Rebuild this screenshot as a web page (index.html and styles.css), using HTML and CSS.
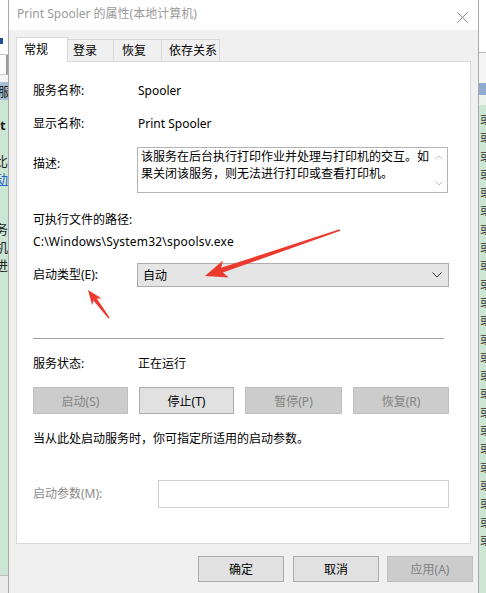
FILE: index.html
```html
<!DOCTYPE html>
<html lang="zh-CN">
<head>
<meta charset="utf-8">
<title>Print Spooler 的属性</title>
<link rel="stylesheet" href="styles.css">
</head>
<body>
<div class="screen">
  <div class="bg-left">
    <div class="bl-top"><span class="bl-dot"></span></div>
    <div class="bl-box"></div>
    <div class="bl-gap"></div>
    <div class="bl-head"><span class="frag">服</span></div>
    <div class="bl-list">
      <span class="frag f-bold">t</span>
      <span class="frag">比</span>
      <span class="frag f-link">动</span>
      <span class="frag f-gap"></span>
      <span class="frag">务</span>
      <span class="frag">机</span>
      <span class="frag">进</span>
    </div>
    <div class="bl-bottom"></div>
  </div>

  <div class="dialog">
    <div class="titlebar">
      <span class="title">Print Spooler 的属性(本地计算机)</span>
      <svg class="close" width="11" height="11" viewBox="0 0 11 11"><path d="M0.5 0.5 L10.5 10.5 M10.5 0.5 L0.5 10.5" stroke="#8a8a8a" stroke-width="1" fill="none"/></svg>
    </div>
    <div class="dlg-body">
      <div class="tabs">
        <div class="tab active t1">常规</div>
        <div class="tab t2">登录</div>
        <div class="tab t3">恢复</div>
        <div class="tab t4">依存关系</div>
      </div>
      <div class="panel">
        <div class="row r-name"><span class="k">服务名称:</span><span class="v">Spooler</span></div>
        <div class="row r-disp"><span class="k">显示名称:</span><span class="v">Print Spooler</span></div>
        <div class="row r-desc">
          <span class="k k-top">描述:</span>
          <div class="desc">
            <div class="desc-text">该服务在后台执行打印作业并处理与打印机的交互。如<br>果关闭该服务，则无法进行打印或查看打印机。</div>
            <div class="vscroll">
              <svg width="8" height="5" viewBox="0 0 8 5"><path d="M0.5 4.5 L4 1 L7.5 4.5" stroke="#c2c2c2" fill="none"/></svg>
              <svg width="8" height="5" viewBox="0 0 8 5"><path d="M0.5 0.5 L4 4 L7.5 0.5" stroke="#c2c2c2" fill="none"/></svg>
            </div>
          </div>
        </div>
        <div class="line r-path-label">可执行文件的路径:</div>
        <div class="line r-path">C:\Windows\System32\spoolsv.exe</div>
        <div class="row r-type">
          <span class="k">启动类型(E):</span>
          <div class="select">
            <span>自动</span>
            <svg width="10" height="6" viewBox="0 0 10 6"><path d="M0.5 0.5 L5 5 L9.5 0.5" stroke="#333" fill="none"/></svg>
          </div>
        </div>
        <div class="sep"></div>
        <div class="row r-state"><span class="k">服务状态:</span><span class="v">正在运行</span></div>
        <div class="btn-row">
          <div class="btn disabled">启动(S)</div>
          <div class="btn">停止(T)</div>
          <div class="btn disabled">暂停(P)</div>
          <div class="btn disabled">恢复(R)</div>
        </div>
        <div class="line r-hint">当从此处启动服务时，你可指定所适用的启动参数。</div>
        <div class="row r-param">
          <span class="k k-dis">启动参数(M):</span>
          <div class="input"></div>
        </div>
      </div>
      <div class="footer">
        <div class="btn fbtn">确定</div>
        <div class="btn fbtn">取消</div>
        <div class="btn fbtn disabled">应用(A)</div>
      </div>
    </div>
  </div>

  <div class="bg-right">
    <div class="br-top"></div>
    <div class="br-mid"></div>
    <div class="br-head"></div>
    <div class="br-list">
      <span>或</span><span>或</span><span>或</span><span>或</span><span>或</span><span>或</span>
      <span>或</span><span>或</span><span>或</span><span>或</span><span>或</span><span>或</span>
      <span>或</span><span>或</span><span>或</span><span>或</span><span>或</span><span>或</span>
      <span>或</span><span>或</span><span>或</span><span>或</span><span>或</span><span>或</span>
    </div>
  </div>

  <svg class="annot" width="486" height="593" viewBox="0 0 486 593">
    <polygon fill="#ec3a2f" points="205,276 228.7,277.4 222.8,272.6 340.4,230.8 339.6,229.2 221.2,267.8 222.9,260.4"/>
    <polygon fill="#ec3a2f" points="88,290 101.8,298.4 96.8,298.6 109.6,317.6 108.4,318.4 93.4,300.6 92.2,305.6"/>
  </svg>
</div>
</body>
</html>
```

FILE: styles.css
```css
* { box-sizing: border-box; }

html, body {
  margin: 0;
  padding: 0;
}

body {
  font-family: "Noto Sans", "Noto Sans CJK SC", sans-serif;
  font-size: 12px;
  color: #000;
  background: #fff;
}

.screen {
  position: relative;
  display: flex;
  width: 486px;
  height: 593px;
  overflow: hidden;
  background: #fff;
}

/* ---------- backdrop strips ---------- */
.bg-left {
  width: 8px;
  flex: none;
  display: flex;
  flex-direction: column;
  overflow: hidden;
}
.bl-top {
  height: 55px;
  background: #fff;
  border-bottom: 1px solid #c8c8c8;
  position: relative;
}
.bl-dot {
  display: block;
  width: 3px;
  height: 6px;
  background: #1d4f91;
  margin: 38px 0 0 0;
}
.bl-box {
  height: 20px;
  background: #fbfbfb;
  border-right: 2px solid #9a9a9a;
  border-bottom: 1px solid #c8c8c8;
}
.bl-gap {
  height: 7px;
  background: #f3f3f3;
}
.bl-head {
  height: 18px;
  background: #a6bdd6;
  overflow: hidden;
}
.bl-list {
  flex: 1;
  background: #cde6d3;
  display: flex;
  flex-direction: column;
  overflow: hidden;
  padding-top: 16px;
}
.frag {
  display: block;
  height: 18px;
  line-height: 18px;
  margin-left: -5px;
  font-size: 13px;
  color: #222;
  white-space: nowrap;
}
.bl-head .frag { margin-left: -2px; }
.f-bold { font-weight: bold; margin-left: 0; height: 36px; }
.f-link { color: #2a63c9; text-decoration: underline; }
.f-gap { height: 32px; }
.bl-bottom {
  height: 18px;
  background: #ececec;
  border-top: 1px solid #bdbdbd;
}

.bg-right {
  width: 7px;
  flex: none;
  display: flex;
  flex-direction: column;
  overflow: hidden;
}
.br-top {
  height: 53px;
  background: #fff;
  border-bottom: 1px solid #bcbcbc;
}
.br-mid {
  height: 30px;
  background: #f5f5f5;
}
.br-head {
  height: 12px;
  background: #8fabcf;
}
.br-list {
  flex: 1;
  background: linear-gradient(#eaf4ec 0 10px, #cde6d3 10px);
  display: flex;
  flex-direction: column;
  padding-top: 16px;
  overflow: hidden;
}
.br-list span {
  display: block;
  height: 18.3px;
  line-height: 18px;
  font-size: 12px;
  color: #333;
  margin-left: 1px;
  flex: none;
}

/* ---------- dialog ---------- */
.dialog {
  width: 471px;
  flex: none;
  border-left: 1px solid #a9a9a9;
  border-right: 1px solid #a9a9a9;
  display: flex;
  flex-direction: column;
  background: #f0f0f0;
}
.titlebar {
  height: 30px;
  background: #fff;
  display: flex;
  align-items: flex-start;
  justify-content: space-between;
  padding: 5px 10px 0 8px;
}
.title {
  font-size: 12px;
  line-height: 18px;
  color: #9a9a9a;
}
.close {
  margin-top: 7px;
}

.dlg-body {
  flex: 1;
  display: flex;
  flex-direction: column;
  padding: 7px 0 0 7px;
}

.tabs {
  display: flex;
  align-items: flex-end;
  height: 24px;
  position: relative;
  z-index: 1;
}
.tab {
  height: 22px;
  line-height: 21px;
  border: 1px solid #d9d9d9;
  border-bottom: none;
  background: #f0f0f0;
  margin-left: -1px;
  white-space: nowrap;
}
.tab.active {
  height: 25px;
  line-height: 24px;
  background: #fff;
  margin-left: 0;
  margin-bottom: -1px;
  position: relative;
  z-index: 2;
}
.t1 { width: 52px; padding-left: 7px; }
.t2 { width: 47px; padding-left: 5px; }
.t3 { width: 49px; padding-left: 8px; }
.t4 { width: 59px; padding-left: 7px; }

.panel {
  height: 483px;
  margin-right: 7px;
  background: #fff;
  border: 1px solid #d9d9d9;
  padding: 19px 21px 0 16px;
  display: flex;
  flex-direction: column;
}

.row {
  display: flex;
  align-items: center;
  flex: none;
}
.line {
  height: 20px;
  line-height: 20px;
  flex: none;
  white-space: nowrap;
}
.k {
  width: 104px;
  flex: none;
  line-height: 20px;
  white-space: nowrap;
}
.v {
  padding-left: 1px;
  line-height: 20px;
}
.r-name { height: 20px; }
.r-disp { height: 20px; margin-top: 13px; }
.r-desc { align-items: flex-start; margin-top: 13px; }
.k-top { padding-top: 7px; }
.desc {
  flex: 1;
  height: 46px;
  margin-right: 1px;
  border: 1px solid #b4b4b4;
  display: flex;
  overflow: hidden;
}
.desc-text {
  flex: 1;
  padding: 0 0 0 3px;
  line-height: 17px;
  white-space: nowrap;
}
.vscroll {
  width: 17px;
  flex: none;
  display: flex;
  flex-direction: column;
  justify-content: space-between;
  align-items: center;
  padding: 7px 0 6px;
}
.r-path-label { margin-top: 17px; }
.r-path { margin-top: 2px; letter-spacing: 0.2px; }
.r-type { margin-top: 11px; }
.select {
  flex: 1;
  height: 24px;
  border: 1px solid #adadad;
  background: #e5e5e5;
  display: flex;
  align-items: center;
  justify-content: space-between;
  padding: 0 6px 0 5px;
}
.sep {
  height: 1px;
  background: #a0a0a0;
  margin: 51px 5px 0 0;
  flex: none;
}
.r-state { margin-top: 15px; height: 20px; }
.btn-row {
  display: grid;
  grid-template-columns: 95px 95px 97px 96px;
  justify-content: space-between;
  margin-top: 13px;
}
.btn {
  height: 27px;
  border: 1px solid #adadad;
  background: #e1e1e1;
  display: flex;
  align-items: center;
  justify-content: center;
  white-space: nowrap;
}
.btn.disabled {
  background: #cccccc;
  border-color: #bfbfbf;
  color: #838383;
}
.r-hint { margin-top: 15px; }
.r-param { margin-top: 31px; }
.k-dis { width: 125px; color: #8a8a8a; }
.input {
  flex: 1;
  height: 28px;
  border: 1px solid #cfcfcf;
  background: #fff;
}

.footer {
  display: flex;
  justify-content: flex-end;
  gap: 8px;
  margin-top: 12px;
  padding-right: 5px;
}
.fbtn {
  width: 86px;
  height: 26px;
}
.fbtn:first-child { margin-right: 1px; }

.annot {
  position: absolute;
  left: 0;
  top: 0;
  pointer-events: none;
}
```
